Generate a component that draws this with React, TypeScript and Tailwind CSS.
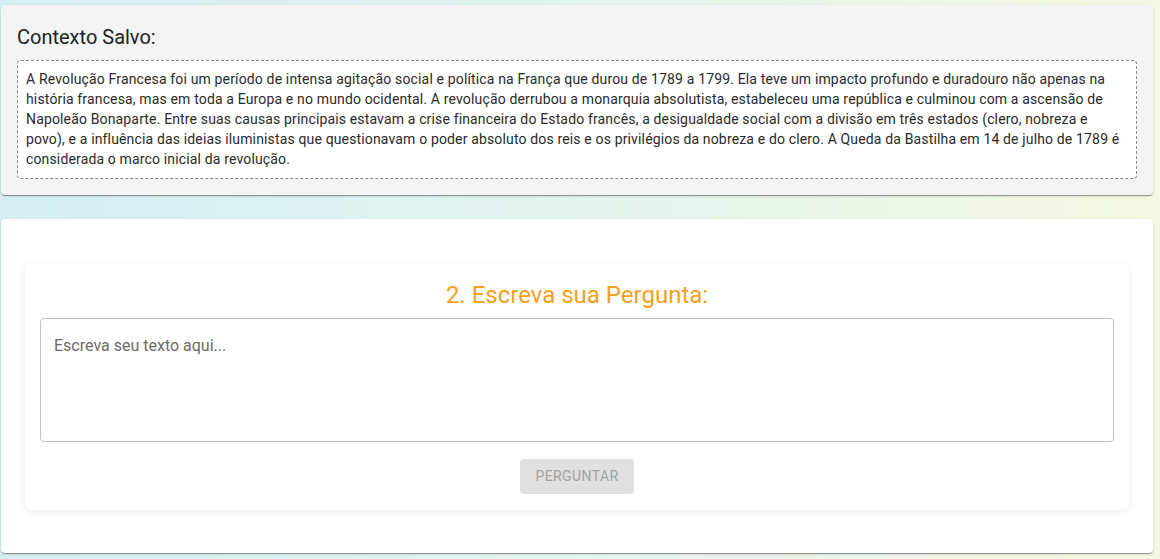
import React from "react";

const contexto =
  "A Revolução Francesa foi um período de intensa agitação social e política na França que durou de 1789 a 1799. Ela teve um impacto profundo e duradouro não apenas na história francesa, mas em toda a Europa e no mundo ocidental. A revolução derrubou a monarquia absolutista, estabeleceu uma república e culminou com a ascensão de Napoleão Bonaparte. Entre suas causas principais estavam a crise financeira do Estado francês, a desigualdade social com a divisão em três estados (clero, nobreza e povo), e a influência das ideias iluministas que questionavam o poder absoluto dos reis e os privilégios da nobreza e do clero. A Queda da Bastilha em 14 de julho de 1789 é considerada o marco inicial da revolução.";

export default function App() {
  return (
    <div
      className="min-h-[559px] w-[1160px] bg-gradient-to-r from-[#d4eef4] via-[#e4f4ee] to-[#f4f8e2] pt-[5px] pb-[6px] pl-[1px] pr-[7px]"
      style={{ fontFamily: "Roboto, 'Liberation Sans', sans-serif" }}
    >
      <div className="rounded-[4px] bg-[#f4f4f4] p-4 shadow-[0_2px_1px_-1px_rgba(0,0,0,0.25),0_1px_1px_0_rgba(0,0,0,0.14),0_1px_3px_0_rgba(0,0,0,0.12)]">
        <h2 className="mb-[7px] text-[20px] leading-[32px] text-[#222]">Contexto Salvo:</h2>
        <div className="rounded-[4px] border border-dashed border-[#8a8a8a] bg-white px-2 pt-2 pb-[9px]">
          <p className="text-[14px] leading-[20px] tracking-[0.15px] text-[#2a2a2a]">{contexto}</p>
        </div>
      </div>

      <div className="mt-6 rounded-[4px] bg-white px-6 pt-[44px] pb-[43px] shadow-[0_2px_1px_-1px_rgba(0,0,0,0.25),0_1px_1px_0_rgba(0,0,0,0.14),0_1px_3px_0_rgba(0,0,0,0.12)]">
        <div className="flex flex-col items-stretch rounded-[8px] bg-white px-[15px] pt-4 pb-4 shadow-[0_2px_8px_rgba(0,0,0,0.08)]">
          <h3 className="mb-[7px] text-center text-[24px] leading-[32px] text-[#f59f1b]">
            2. Escreva sua Pergunta:
          </h3>
          <textarea
            rows={4}
            placeholder="Escreva seu texto aqui..."
            className="h-[124px] resize-none rounded-[4px] border border-[#c4c4c4] px-[13px] py-[15px] text-[16px] leading-[23px] text-[#222] outline-none placeholder:text-[#6b6b6b]"
          />
          <div className="mt-[17px] flex justify-center">
            <button
              disabled
              className="h-[35px] w-[114px] rounded-[4px] bg-[#e0e0e0] text-[14px] font-normal tracking-[0.4px] text-[#a3a3a3] uppercase"
            >
              Perguntar
            </button>
          </div>
        </div>
      </div>
    </div>
  );
}
